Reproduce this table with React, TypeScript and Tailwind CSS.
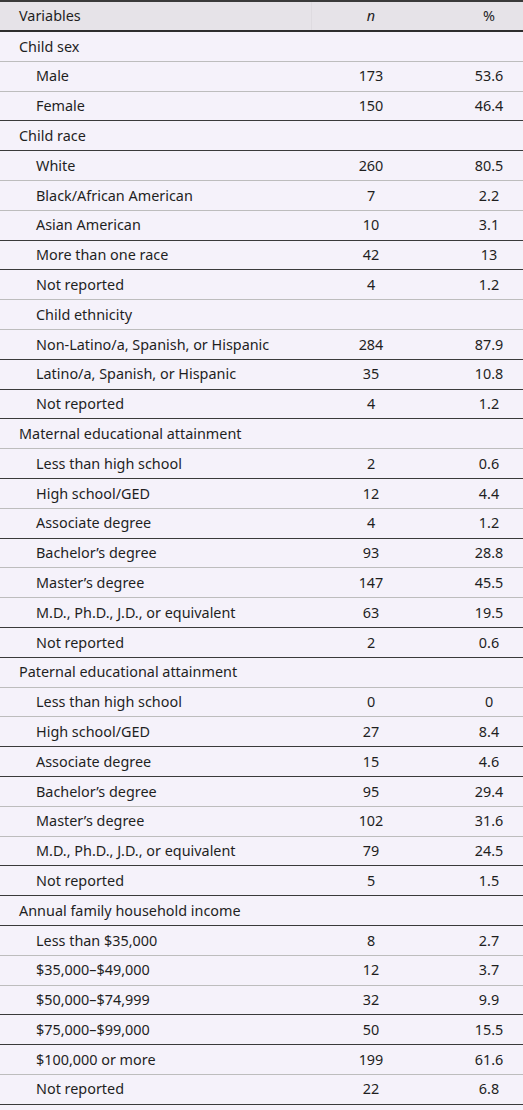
import React from "react";

type Row = { label: string; n?: string; p?: string; indent: boolean; dark: boolean };

const raw: [string, string, string, number, number][] = [
  ["Child sex", "", "", 0, 0],
  ["Male", "173", "53.6", 1, 0],
  ["Female", "150", "46.4", 1, 1],
  ["Child race", "", "", 0, 1],
  ["White", "260", "80.5", 1, 0],
  ["Black/African American", "7", "2.2", 1, 0],
  ["Asian American", "10", "3.1", 1, 1],
  ["More than one race", "42", "13", 1, 1],
  ["Not reported", "4", "1.2", 1, 0],
  ["Child ethnicity", "", "", 1, 0],
  ["Non-Latino/a, Spanish, or Hispanic", "284", "87.9", 1, 1],
  ["Latino/a, Spanish, or Hispanic", "35", "10.8", 1, 1],
  ["Not reported", "4", "1.2", 1, 1],
  ["Maternal educational attainment", "", "", 0, 0],
  ["Less than high school", "2", "0.6", 1, 1],
  ["High school/GED", "12", "4.4", 1, 0],
  ["Associate degree", "4", "1.2", 1, 1],
  ["Bachelor\u2019s degree", "93", "28.8", 1, 0],
  ["Master\u2019s degree", "147", "45.5", 1, 0],
  ["M.D., Ph.D., J.D., or equivalent", "63", "19.5", 1, 1],
  ["Not reported", "2", "0.6", 1, 1],
  ["Paternal educational attainment", "", "", 0, 0],
  ["Less than high school", "0", "0", 1, 0],
  ["High school/GED", "27", "8.4", 1, 1],
  ["Associate degree", "15", "4.6", 1, 1],
  ["Bachelor\u2019s degree", "95", "29.4", 1, 0],
  ["Master\u2019s degree", "102", "31.6", 1, 0],
  ["M.D., Ph.D., J.D., or equivalent", "79", "24.5", 1, 1],
  ["Not reported", "5", "1.5", 1, 1],
  ["Annual family household income", "", "", 0, 1],
  ["Less than $35,000", "8", "2.7", 1, 0],
  ["$35,000\u2013$49,000", "12", "3.7", 1, 0],
  ["$50,000\u2013$74,999", "32", "9.9", 1, 1],
  ["$75,000\u2013$99,000", "50", "15.5", 1, 1],
  ["$100,000 or more", "199", "61.6", 1, 0],
  ["Not reported", "22", "6.8", 1, 1],
];

const rows: Row[] = raw.map(([label, n, p, i, d]) => ({ label, n, p, indent: i === 1, dark: d === 1 }));

export default function App() {
  return (
    <div
      className="w-[523px] h-[1110px] bg-[#f5f2fa] text-[#1f1f1f] text-[14.4px] overflow-hidden"
      style={{ fontFamily: '"Noto Sans", "Open Sans", sans-serif' }}
    >
      <div className="border-t-2 border-[#3a3a3a]">
        <div className="flex h-[30px] items-center bg-[#e6e3e8] border-b-2 border-[#2e2e2e]">
          <div className="w-[312px] h-full flex items-center pl-[19px] border-r border-[#dedbe0]">Variables</div>
          <div className="w-[118px] text-center italic">n</div>
          <div className="flex-1 text-center pl-[25px]">%</div>
        </div>
        {rows.map((r, i) => (
          <div
            key={i}
            className={`flex h-[29.8px] items-center border-b ${r.dark ? "border-[#3a3a3a]" : "border-[#bdbdbd]"}`}
          >
            <div className={`w-[312px] whitespace-nowrap ${r.indent ? "pl-[36px]" : "pl-[19px]"}`}>{r.label}</div>
            <div className="w-[118px] text-center">{r.n}</div>
            <div className="flex-1 text-center pl-[25px]">{r.p}</div>
          </div>
        ))}
      </div>
    </div>
  );
}
